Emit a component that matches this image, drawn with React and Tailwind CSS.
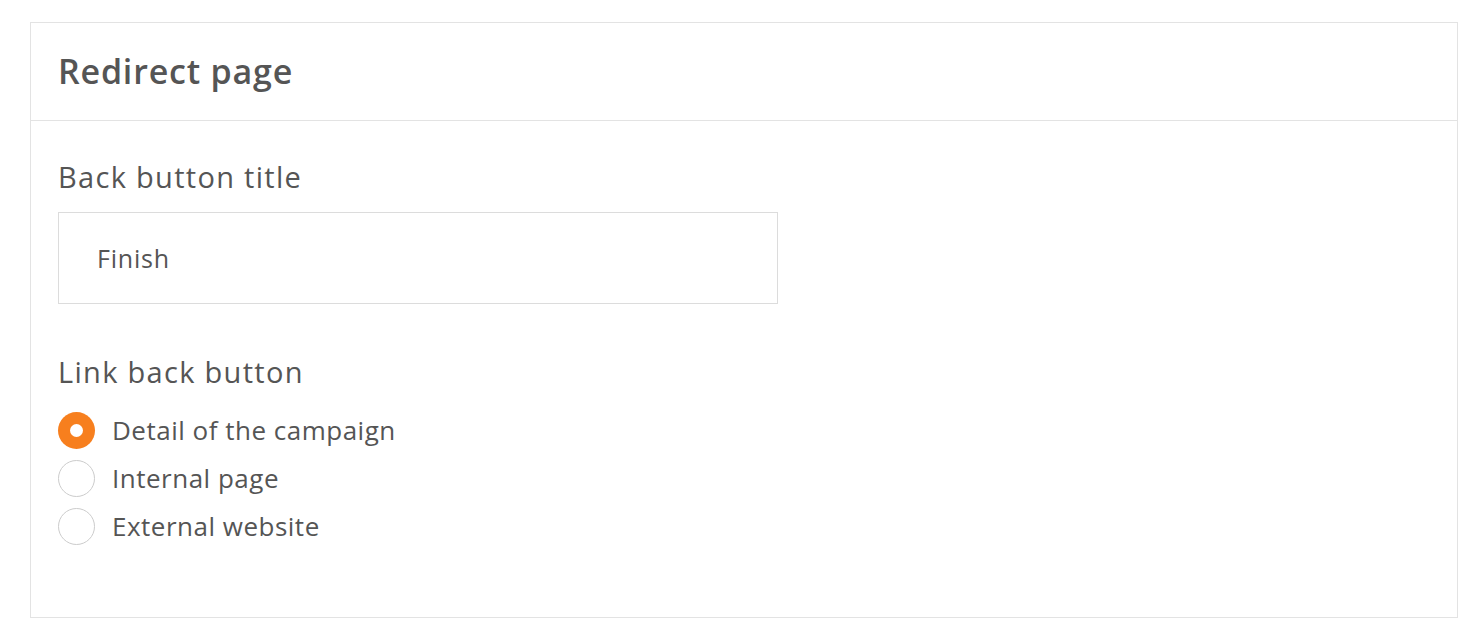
import { useState } from 'react';

const options = ['Detail of the campaign', 'Internal page', 'External website'];

export default function App() {
  const [selected, setSelected] = useState(0);
  const [title, setTitle] = useState('Finish');

  return (
    <div className="min-h-screen bg-white pt-[22px] pl-[30px] pr-[26px] font-['Open_Sans',sans-serif] text-[#555555]">
      <div className="border border-[#e3e3e3] h-[596px]">
        <div className="h-[98px] flex items-center px-[27px] border-b border-[#e3e3e3]">
          <h2 className="text-[34px] font-semibold tracking-[0.8px]">Redirect page</h2>
        </div>
        <div className="px-[27px] pt-[36px]">
          <label className="block text-[29px] leading-[40px] tracking-[1.3px]">
            Back button title
          </label>
          <input
            type="text"
            value={title}
            onChange={(e) => setTitle(e.target.value)}
            className="mt-[15px] block w-[720px] h-[92px] border border-[#dcdcdc] px-[38px] text-[25px] tracking-[0.8px] text-[#555555] outline-none"
          />
          <label className="block mt-[48px] text-[29px] leading-[40px] tracking-[1.3px]">
            Link back button
          </label>
          <div className="mt-[20px] flex flex-col gap-[12px]">
            {options.map((opt, i) => (
              <button
                key={opt}
                type="button"
                onClick={() => setSelected(i)}
                className="flex items-center gap-[17px] h-[36px] text-left"
              >
                {selected === i ? (
                  <span className="w-[37px] h-[37px] rounded-full bg-[#f77f1e] flex items-center justify-center">
                    <span className="w-[13px] h-[13px] rounded-full bg-white" />
                  </span>
                ) : (
                  <span className="w-[37px] h-[37px] rounded-full border border-[#cccccc] bg-white" />
                )}
                <span className="text-[26px] tracking-[0.5px]">{opt}</span>
              </button>
            ))}
          </div>
        </div>
      </div>
    </div>
  );
}
